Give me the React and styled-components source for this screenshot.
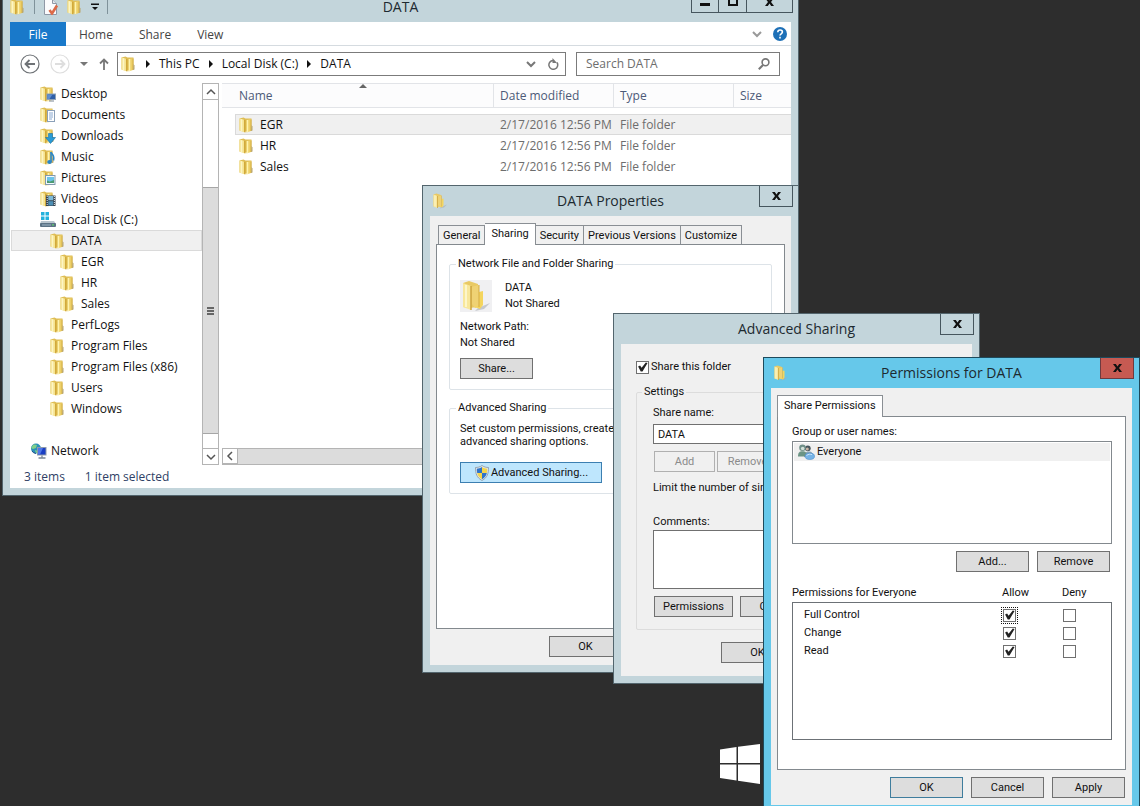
import React, { useState } from 'react';
import styled, { createGlobalStyle, css } from 'styled-components';

const ui = '"Open Sans", "Noto Sans", sans-serif';
const legacy = 'Roboto, "Liberation Sans", sans-serif';

const TREE = [
    { name: 'Desktop', level: 1, kind: 'desktop' },
    { name: 'Documents', level: 1, kind: 'documents' },
    { name: 'Downloads', level: 1, kind: 'downloads' },
    { name: 'Music', level: 1, kind: 'music' },
    { name: 'Pictures', level: 1, kind: 'pictures' },
    { name: 'Videos', level: 1, kind: 'videos' },
    { name: 'Local Disk (C:)', level: 1, kind: 'disk' },
    { name: 'DATA', level: 2, selected: true },
    { name: 'EGR', level: 3 },
    { name: 'HR', level: 3 },
    { name: 'Sales', level: 3 },
    { name: 'PerfLogs', level: 2 },
    { name: 'Program Files', level: 2 },
    { name: 'Program Files (x86)', level: 2 },
    { name: 'Users', level: 2 },
    { name: 'Windows', level: 2 },
];

const FILES = ['EGR', 'HR', 'Sales'];

/* ---------- icons ---------- */

const overlays = {
    desktop: (
        <>
            <rect x="7" y="8" width="8.500" height="5.500" fill="#2f5fa8" stroke="#8ea2b8" strokeWidth="1" />
            <path d="M7.500 8.500h5l-3 4.500h-2z" fill="#5f8fd0" />
            <path d="M9 15h5" stroke="#7a8794" />
        </>
    ),
    documents: (
        <>
            <rect x="7.500" y="3.500" width="7" height="11" fill="#fff" stroke="#8ba0b8" />
            <path d="M9 6h4M9 8h4M9 10h4M9 12h3" stroke="#6b93c4" strokeWidth=".8" />
        </>
    ),
    downloads: <path d="M8.500 5.500h4v4h3l-5 6-5-6h3z" fill="#2a9bd6" stroke="#1670a5" strokeWidth=".6" />,
    music: (
        <>
            <path d="M11 3v10" stroke="#2a86c8" strokeWidth="1.600" />
            <path d="M11 3c1 3 4 3 2.500 8.500" stroke="#2a86c8" strokeWidth="1.500" fill="none" />
            <ellipse cx="9.500" cy="13" rx="2.300" ry="1.900" fill="#2a86c8" />
        </>
    ),
    pictures: (
        <>
            <rect x="5.500" y="5.500" width="9.500" height="9" fill="#f2f9fd" stroke="#8199ad" />
            <path d="M7 7h7v4l-3 1-4-1z" fill="#6cc3e8" />
            <path d="M7 10.500l3 1 4-1.500v3H7z" fill="#4c9a72" />
        </>
    ),
    videos: (
        <>
            <rect x="6" y="4.500" width="9.500" height="10.500" fill="#35414c" />
            <rect x="8.300" y="5" width="5" height="4.300" fill="#7db9d8" />
            <rect x="8.300" y="10.200" width="5" height="4.300" fill="#4c8fb5" />
            <path d="M7.200 5v10M14.400 5v10" stroke="#dfe6ea" strokeDasharray="1 1" />
        </>
    ),
};

const FolderIcon = ({ kind, size = 16 }) => (
    <svg width={size} height={size} viewBox="0 0 16 16" aria-hidden="true">
        <path d="M.5 1.500l4-1 2 1h6v12l-6 1H4.500l-4-1z" fill="#dfbe55" />
        <path d="M.5 1.500L6 3v12.500l-5.500-2z" fill="#f5e493" />
        <path d="M2.500 2.200v12" stroke="#fdf5c4" strokeWidth="1.500" />
        <path d="M5 2.500l1.500.5v12.500L5 15z" fill="#d2a93a" />
        <path d="M7.500 3l4.500-1v12l-4.500 1.500z" fill="#edd069" />
        <path d="M8.500 3v12" stroke="#fff3ae" strokeWidth="1.500" />
        <path d="M12 2.500v11.500" stroke="#cda63b" strokeWidth=".8" />
        <path d="M12.500 8l1 1.500v4l-1.500.500z" fill="#b9a66d" />
        {overlays[kind]}
    </svg>
);

const OpenFolderIcon = ({ size = 16 }) => (
    <svg width={size} height={size} viewBox="0 0 32 32" aria-hidden="true">
        <path d="M18 28l12-5-6 6-9 2z" fill="#a9adb4" opacity=".6" />
        <path d="M3 3l6-2 9 3v23l-9 1-6-1z" fill="#e9c964" />
        <path d="M3 3l8 3v24l-8-3z" fill="#f8e79b" />
        <path d="M11 7l8-2v22l-4 1-3-4-1 5z" fill="#efd274" />
        <path d="M19 12l4-1v14l-3 4-5-2 4-2z" fill="#f4d55e" />
        <path d="M11 6v24" stroke="#c99f38" strokeWidth="1.400" />
        <path d="M19 5v22" stroke="#d5ad45" />
        <path d="M6 5v22" stroke="#fdf6c9" strokeWidth="2" />
    </svg>
);

const DiskIcon = () => (
    <svg width="16" height="16" viewBox="0 0 16 16" aria-hidden="true">
        <path d="M1 0h3.500v3.500H1zM5.500 0H9v3.500H5.500zM1 4.500h3.500V8H1zM5.500 4.500H9V8H5.500z" fill="#23b2dd" />
        <path d="M1 9h13l2 3H0z" fill="#b9c5ce" />
        <rect x="0" y="11" width="16" height="4" rx="1" fill="#5c7385" />
        <path d="M2 13h9" stroke="#9db4c4" />
        <rect x="12" y="12.300" width="2" height="1.200" fill="#5ed46b" />
    </svg>
);

const NetworkIcon = () => (
    <svg width="18" height="16" viewBox="0 0 18 16" aria-hidden="true">
        <circle cx="6" cy="5.500" r="5" fill="#2b8fb8" />
        <path d="M3 2c2-1 3 0 4 0l-1 3-3 1-2-1zM5 7l3 1-2 2.500z" fill="#7fd08a" />
        <path d="M2 8a5 5 0 0 0 4 2.500" stroke="#1f4f8b" fill="none" />
        <rect x="7.500" y="4.500" width="8.500" height="7.500" fill="#1b3fc4" stroke="#8d99ab" />
        <path d="M8 5h5l-3 6.500H8z" fill="#4f78e8" />
        <path d="M12 12.500v2M8.500 15h7" stroke="#7a8794" strokeWidth="1.300" />
    </svg>
);

const ShieldIcon = () => (
    <svg width="16" height="16" viewBox="0 0 16 16" aria-hidden="true">
        <path d="M8 .5C6 2 3.500 2.500 1.500 2.500c0 6 1 10 6.500 13 5.500-3 6.500-7 6.500-13C12.500 2.500 10 2 8 .5z" fill="#dfe6ec" stroke="#7f8a94" strokeWidth=".7" />
        <path d="M8 2C6.500 3 4.500 3.600 2.800 3.700c0 1.700.1 3 .4 4.300H8z" fill="#2f74c9" />
        <path d="M8 2c1.500 1 3.500 1.600 5.200 1.700 0 1.700-.1 3-.4 4.300H8z" fill="#f4d54b" />
        <path d="M8 8H3.200c.6 2.700 2 4.600 4.800 6.200z" fill="#f4d54b" />
        <path d="M8 8h4.800c-.6 2.700-2 4.600-4.800 6.200z" fill="#2f74c9" />
    </svg>
);

const GroupIcon = () => (
    <svg width="17" height="16" viewBox="0 0 17 16" aria-hidden="true">
        <circle cx="9.800" cy="4.300" r="2.900" fill="#46555c" />
        <circle cx="9.300" cy="4.900" r="1.500" fill="#c9b3a2" />
        <path d="M6 13c0-4 2-5.500 5-5.500s4 2 4 5z" fill="#8aa4b4" />
        <circle cx="4.500" cy="3.800" r="3.300" fill="#6f8f88" />
        <circle cx="4.700" cy="4.500" r="1.800" fill="#d2dfd8" />
        <path d="M0 12.500c0-4 1.500-5.300 4.500-5.300S9 8.500 9 12.500z" fill="#6b9485" />
        <ellipse cx="11.800" cy="12.300" rx="4.700" ry="3.200" fill="#76b3e6" stroke="#4d8cc9" strokeWidth=".6" />
        <path d="M8.500 11.500c2-1.500 4-1.500 5.500-.8" stroke="#cbe5f8" fill="none" />
    </svg>
);

const DocCheckIcon = () => (
    <svg width="16" height="16" viewBox="0 0 16 16" aria-hidden="true">
        <path d="M1.500.5h8l4 4v11h-12z" fill="#fbfbfd" stroke="#8f98a6" />
        <path d="M9.500.5v4h4" fill="#e2e6ec" stroke="#8f98a6" />
        <path d="M6.500 11l2.500 3.500L14 6.500" fill="none" stroke="#dc6a48" strokeWidth="2.600" />
    </svg>
);

const CloseGlyph = () => (
    <svg width="9" height="8" viewBox="0 0 9 8" aria-hidden="true">
        <path d="M0 0h2.800l1.700 2.500L6.200 0H9L6 4l3 4H6.200L4.500 5.500 2.800 8H0l3-4z" fill="#111" />
    </svg>
);

const Chevron = ({ dir = 'down', color = '#555', size = 10, width = 1.5 }) => {
    const d = {
        down: 'M1 3l4 4 4-4',
        up: 'M1 7l4-4 4 4',
        left: 'M7 1L3 5l4 4',
    }[dir];
    return (
        <svg width={size} height={size} viewBox="0 0 10 10" aria-hidden="true">
            <path d={d} fill="none" stroke={color} strokeWidth={width} />
        </svg>
    );
};

const Triangle = ({ dir = 'right', color = '#111' }) => {
    const d = { right: 'M2 0l4 4-4 4z', down: 'M0 2h8L4 6z', up: 'M0 6h8L4 2z' }[dir];
    return (
        <svg width="8" height="8" viewBox="0 0 8 8" aria-hidden="true">
            <path d={d} fill={color} />
        </svg>
    );
};

const RoundArrow = ({ back }) => (
    <svg width="20" height="20" viewBox="0 0 20 20" aria-hidden="true">
        <g fill="none" stroke={back ? '#6f7377' : '#dedede'}>
            <circle cx="10" cy="10" r="9" strokeWidth="1.200" />
            <path d={back ? 'M15 10H6M9.500 6L5.500 10l4 4' : 'M5 10h9M10.500 6l4 4-4 4'} strokeWidth="1.800" />
        </g>
    </svg>
);

const WindowsLogo = () => (
    <svg width="40" height="40" viewBox="0 0 40 40" aria-hidden="true">
        <path d="M0 5.500L16.500 3v16H0zM18 2.800L40 0v19H18zM0 20.500h16.500v16L0 34zM18 20.500h22V40l-22-3.200z" fill="#fff" />
    </svg>
);

/* ---------- window frame ---------- */

const WindowFrame = ({ title, icon, controls, active, closeLabel = 'Close', children, ...place }) => (
    <Frame $active={active} {...place}>
        <TitleBar>
            <TitleSide>{icon}</TitleSide>
            <Title>{title}</Title>
            <TitleButtons>
                {controls}
                <CaptionButton type="button" aria-label={closeLabel} $danger={active} $wide={!!controls}>
                    <CloseGlyph />
                </CaptionButton>
            </TitleButtons>
        </TitleBar>
        <Client>{children}</Client>
    </Frame>
);

const Explorer = () => (
    <WindowFrame
        title="DATA"
        $x={2}
        $y={-9}
        $w={797}
        $h={505}
        icon={
            <QuickAccess>
                <FolderIcon />
                <Divider />
                <DocCheckIcon />
                <FolderIcon />
                <svg width="8" height="8" viewBox="0 0 8 8" aria-hidden="true">
                    <path d="M0 .5h8v1.500H0zM1 4h6L4 7z" fill="#111" />
                </svg>
                <Divider />
            </QuickAccess>
        }
        controls={
            <>
                <CaptionButton type="button" aria-label="Minimize">
                    <svg width="10" height="8" aria-hidden="true"><path d="M0 5h10v3H0z" fill="#111" /></svg>
                </CaptionButton>
                <CaptionButton type="button" aria-label="Maximize">
                    <svg width="10" height="8" aria-hidden="true"><path d="M1 0v7h8V0" fill="none" stroke="#111" strokeWidth="2" /></svg>
                </CaptionButton>
            </>
        }
    >
        <Ribbon>
            <RibbonTab type="button" $file>File</RibbonTab>
            <RibbonTab type="button">Home</RibbonTab>
            <RibbonTab type="button">Share</RibbonTab>
            <RibbonTab type="button">View</RibbonTab>
            <RibbonEnd>
                <Chevron color="#999" width={2} />
                <svg width="14" height="14" viewBox="0 0 14 14" aria-hidden="true">
                    <circle cx="7" cy="7" r="7" fill="#1d70b7" />
                    <path d="M4.800 5.200c0-3 4.600-2.800 4.600-.2C9.400 6.800 7 6.800 7 8.600M7 9.800v1.700" fill="none" stroke="#fff" strokeWidth="1.600" />
                </svg>
            </RibbonEnd>
        </Ribbon>

        <NavBar>
            <IconButton type="button" aria-label="Back"><RoundArrow back /></IconButton>
            <IconButton type="button" aria-label="Forward"><RoundArrow /></IconButton>
            <Triangle dir="down" color="#777" />
            <IconButton type="button" aria-label="Up">
                <svg width="12" height="12" viewBox="0 0 12 12"><path d="M6 12V2M2 5.500L6 1.500l4 4" fill="none" stroke="#777" strokeWidth="1.800" /></svg>
            </IconButton>
            <Address>
                <FolderIcon />
                <Triangle />
                <span>This PC</span>
                <Triangle />
                <span>Local Disk (C:)</span>
                <Triangle />
                <span>DATA</span>
                <AddressEnd>
                    <Chevron color="#777" width={2} />
                    <svg width="12" height="12" viewBox="0 0 12 12" aria-hidden="true">
                        <path d="M10 4.500A4.400 4.400 0 1 1 6 2.500" fill="none" stroke="#777" strokeWidth="1.500" />
                        <path d="M5.500 0v5h4.500z" fill="#777" />
                    </svg>
                </AddressEnd>
            </Address>
            <Search>
                <SearchInput aria-label="Search DATA" placeholder="Search DATA" />
                <svg width="12" height="12" viewBox="0 0 12 12" aria-hidden="true">
                    <circle cx="7.500" cy="4.300" r="3.400" fill="none" stroke="#777" strokeWidth="1.600" />
                    <path d="M5 7L.8 11.200" stroke="#777" strokeWidth="2" />
                </svg>
            </Search>
        </NavBar>

        <ExplorerBody>
            <Tree>
                {TREE.map((node) => (
                    <TreeItem key={node.name} $level={node.level} $selected={node.selected}>
                        {node.kind === 'disk' ? <DiskIcon /> : <FolderIcon kind={node.kind} />}
                        {node.name}
                    </TreeItem>
                ))}
                <NetworkItem $level={0}>
                    <NetworkIcon />
                    Network
                </NetworkItem>
            </Tree>
            <VScroll>
                <ScrollButton type="button" aria-label="Scroll up"><Chevron dir="up" /></ScrollButton>
                <VThumb><i /><i /><i /></VThumb>
                <ScrollButton type="button" aria-label="Scroll down"><Chevron /></ScrollButton>
            </VScroll>
            <ListPane>
                <FileTable>
                    <colgroup>
                        <col className="lead" />
                        <col />
                        <col className="date" />
                        <col className="type" />
                        <col className="size" />
                    </colgroup>
                    <thead>
                        <tr>
                            <th aria-hidden="true" />
                            <th scope="col" className="name">
                                Name
                                <SortMark><Triangle dir="up" color="#666" /></SortMark>
                            </th>
                            <th scope="col">Date modified</th>
                            <th scope="col">Type</th>
                            <th scope="col">Size</th>
                        </tr>
                    </thead>
                    <tbody>
                        {FILES.map((name, i) => (
                            <FileRow key={name} $selected={i === 0}>
                                <td />
                                <td className="name"><FileName><FolderIcon />{name}</FileName></td>
                                <td>2/17/2016 12:56 PM</td>
                                <td>File folder</td>
                                <td />
                            </FileRow>
                        ))}
                    </tbody>
                </FileTable>
                <HScroll>
                    <ScrollButton type="button" aria-label="Scroll left"><Chevron dir="left" /></ScrollButton>
                    <HThumb />
                </HScroll>
            </ListPane>
        </ExplorerBody>

        <StatusBar>
            <span>3 items</span>
            <span>1 item selected</span>
        </StatusBar>
    </WindowFrame>
);

const Properties = () => (
    <WindowFrame title="DATA Properties" $x={422} $y={185} $w={377} $h={488} icon={<OpenFolderIcon />}>
        <TabStrip>
            <Tab type="button">General</Tab>
            <Tab type="button" $current>Sharing</Tab>
            <Tab type="button">Security</Tab>
            <Tab type="button">Previous Versions</Tab>
            <Tab type="button">Customize</Tab>
        </TabStrip>
        <SharingPage>
            <NetworkGroup>
                <legend>Network File and Folder Sharing</legend>
                <FolderSummary>
                    <Thumb><OpenFolderIcon size={32} /></Thumb>
                    <Lines>
                        <span>DATA</span>
                        <span>Not Shared</span>
                    </Lines>
                </FolderSummary>
                <Lines>
                    <span>Network Path:</span>
                    <span>Not Shared</span>
                </Lines>
                <PushButton type="button">Share...</PushButton>
            </NetworkGroup>
            <AdvancedGroup>
                <legend>Advanced Sharing</legend>
                <p>Set custom permissions, create multiple shares, and set other advanced sharing options.</p>
                <PushButton type="button" $hot $w={142}><ShieldIcon />Advanced Sharing...</PushButton>
            </AdvancedGroup>
        </SharingPage>
        <PropertiesFooter>
            <PushButton type="button">OK</PushButton>
        </PropertiesFooter>
    </WindowFrame>
);

const AdvancedSharing = () => {
    const [shared, setShared] = useState(true);
    return (
        <WindowFrame title="Advanced Sharing" $x={613} $y={313} $w={367} $h={371}>
            <AdvancedPage>
                <CheckLabel>
                    <CheckBox type="checkbox" checked={shared} onChange={(e) => setShared(e.target.checked)} />
                    Share this folder
                </CheckLabel>
                <SettingsGroup>
                    <legend>Settings</legend>
                    <label htmlFor="share-name">Share name:</label>
                    <TextBox id="share-name" defaultValue="DATA" />
                    <ButtonRow $gap={2}>
                        <PushButton type="button" disabled $w={61}>Add</PushButton>
                        <PushButton type="button" disabled $w={61}>Remove</PushButton>
                    </ButtonRow>
                    <LimitText>Limit the number of simultaneous users to:</LimitText>
                    <label htmlFor="share-comments">Comments:</label>
                    <CommentBox id="share-comments" />
                    <ButtonRow $gap={7}>
                        <PushButton type="button" $w={79}>Permissions</PushButton>
                        <PushButton type="button" $w={79}>Caching</PushButton>
                    </ButtonRow>
                </SettingsGroup>
                <AdvancedFooter>
                    <PushButton type="button">OK</PushButton>
                </AdvancedFooter>
            </AdvancedPage>
        </WindowFrame>
    );
};

const Permissions = () => {
    const [rules, setRules] = useState([
        { name: 'Full Control', allow: true, deny: false },
        { name: 'Change', allow: true, deny: false },
        { name: 'Read', allow: true, deny: false },
    ]);

    const toggle = (index, key) => {
        setRules(rules.map((r, i) => (i === index ? { ...r, [key]: !r[key] } : r)));
    };

    return (
        <WindowFrame title="Permissions for DATA" active $x={763} $y={357} $w={377} $h={456} icon={<OpenFolderIcon />}>
            <TabStrip $single>
                <Tab type="button" $current>Share Permissions</Tab>
            </TabStrip>
            <PermissionsPage>
                <span>Group or user names:</span>
                <UserList>
                    <UserItem><GroupIcon />Everyone</UserItem>
                </UserList>
                <UserButtons>
                    <PushButton type="button">Add...</PushButton>
                    <PushButton type="button">Remove</PushButton>
                </UserButtons>
                <RuleTable>
                    <thead>
                        <tr>
                            <th scope="col">Permissions for Everyone</th>
                            <th scope="col">Allow</th>
                            <th scope="col">Deny</th>
                        </tr>
                    </thead>
                    <tbody>
                        {rules.map((rule, i) => (
                            <tr key={rule.name}>
                                <th scope="row">{rule.name}</th>
                                <td>
                                    <CheckBox
                                        type="checkbox"
                                        aria-label={`Allow ${rule.name}`}
                                        checked={rule.allow}
                                        $dotted={i === 0}
                                        onChange={() => toggle(i, 'allow')}
                                    />
                                </td>
                                <td>
                                    <CheckBox
                                        type="checkbox"
                                        aria-label={`Deny ${rule.name}`}
                                        checked={rule.deny}
                                        onChange={() => toggle(i, 'deny')}
                                    />
                                </td>
                            </tr>
                        ))}
                    </tbody>
                </RuleTable>
            </PermissionsPage>
            <PermissionsFooter>
                <PushButton type="button" $default>OK</PushButton>
                <PushButton type="button">Cancel</PushButton>
                <PushButton type="button">Apply</PushButton>
            </PermissionsFooter>
        </WindowFrame>
    );
};

const App = () => (
    <>
        <GlobalStyle />
        <Desktop>
            <Wallmark><WindowsLogo /></Wallmark>
            <Explorer />
            <Properties />
            <AdvancedSharing />
            <Permissions />
        </Desktop>
    </>
);

const GlobalStyle = createGlobalStyle`
  * {
    box-sizing: border-box;
  }

  body {
    margin: 0;
    background: #2d2d2d;
    color: #111;
    font-family: ${ui};
    font-size: 12px;
  }

  button, input, textarea {
    font: inherit;
    color: inherit;
    margin: 0;
  }

  svg {
    flex: none;
    display: block;
  }
`;

const Desktop = styled.main`
  position: relative;
  min-height: 100vh;
  overflow: hidden;
`;

const Wallmark = styled.div`
  position: absolute;
  left: 720px;
  top: 744px;
`;

const Frame = styled.section`
  position: absolute;
  left: ${(p) => p.$x}px;
  top: ${(p) => p.$y}px;
  width: ${(p) => p.$w}px;
  height: ${(p) => p.$h}px;
  display: flex;
  flex-direction: column;
  padding: 0 7px 7px;
  border: 1px solid ${(p) => (p.$active ? '#1d4a5c' : '#53656d')};
  background: ${(p) => (p.$active ? '#66c8ea' : '#c3d5db')};
`;

const TitleBar = styled.header`
  height: 30px;
  flex: none;
  display: grid;
  grid-template-columns: 1fr auto 1fr;
  align-items: center;
`;

const TitleSide = styled.div`
  padding-left: 2px;
`;

const Title = styled.h1`
  margin: 0;
  font-size: 14px;
  font-weight: 400;
  line-height: 14px;
  color: #1d2a30;
`;

const TitleButtons = styled.div`
  display: flex;
  justify-content: flex-end;
  align-self: start;
  margin-right: -2px;
`;

const CaptionButton = styled.button`
  width: ${(p) => (p.$wide ? 46 : 28)}px;
  height: 21px;
  display: flex;
  align-items: center;
  justify-content: center;
  padding: 0;
  border: 1px solid #46565e;
  border-top: 0;
  background: none;

  & + & {
    border-left: 0;
  }

  &:only-child {
    width: 34px;
  }

  ${(p) => p.$danger && css`
    background: #c65a52;
    border-color: #6e3a3f;
  `}
`;

const Client = styled.div`
  flex: 1;
  min-height: 0;
  display: flex;
  flex-direction: column;
  background: #f0f0f0;
`;

/* explorer */

const QuickAccess = styled.div`
  display: flex;
  align-items: center;
  gap: 8px;
  margin-left: -2px;
`;

const Divider = styled.span`
  width: 1px;
  height: 14px;
  background: #7f929a;
`;

const Ribbon = styled.nav`
  height: 24px;
  flex: none;
  display: flex;
  background: #fff;
  border-bottom: 1px solid #d5dbe0;
`;

const RibbonTab = styled.button`
  height: 24px;
  padding: 0 13px;
  border: 0;
  background: none;
  color: #444;

  ${(p) => p.$file && css`
    width: 56px;
    background: #1979ca;
    color: #fff;
  `}
`;

const RibbonEnd = styled.div`
  display: flex;
  align-items: center;
  gap: 11px;
  margin-left: auto;
  padding-right: 4px;
`;

const NavBar = styled.div`
  height: 37px;
  flex: none;
  display: flex;
  align-items: center;
  gap: 10px;
  padding: 0 11px 2px 10px;
  background: #fff;
`;

const IconButton = styled.button`
  display: flex;
  padding: 0;
  border: 0;
  background: none;
`;

const Address = styled.div`
  flex: 1;
  height: 24px;
  display: flex;
  align-items: center;
  gap: 7px;
  margin-left: -3px;
  padding: 0 6px 0 3px;
  border: 1px solid #7b7b7b;
`;

const AddressEnd = styled.span`
  display: flex;
  align-items: center;
  gap: 11px;
  margin-left: auto;
`;

const Search = styled.div`
  width: 204px;
  height: 24px;
  display: flex;
  align-items: center;
  padding: 0 9px;
  border: 1px solid #7b7b7b;
`;

const SearchInput = styled.input`
  flex: 1;
  min-width: 0;
  padding: 0;
  border: 0;
  outline: 0;
  background: none;

  &::placeholder {
    color: #6d6d6d;
    opacity: 1;
  }
`;

const ExplorerBody = styled.div`
  flex: 1;
  min-height: 0;
  display: flex;
  background: #fff;
`;

const Tree = styled.ul`
  width: 192px;
  margin: 0;
  padding: 0;
  list-style: none;
`;

const TreeItem = styled.li`
  height: 21px;
  display: flex;
  align-items: center;
  gap: 5px;
  margin-left: 1px;
  padding-left: ${(p) => 18 + p.$level * 10}px;
  border: 1px solid ${(p) => (p.$selected ? '#dadada' : 'transparent')};
  background: ${(p) => (p.$selected ? '#f0f0f0' : 'none')};
`;

const NetworkItem = styled(TreeItem)`
  margin-top: 21px;
  gap: 3px;
`;

const VScroll = styled.div`
  width: 17px;
  display: flex;
  flex-direction: column;
  justify-content: space-between;
  border: 1px solid #b4b4b4;
`;

const ScrollButton = styled.button`
  width: 15px;
  height: 16px;
  flex: none;
  display: flex;
  align-items: center;
  justify-content: center;
  padding: 0;
  border: 0 solid #b4b4b4;
  background: #fff;

  &:first-child {
    border-bottom-width: 1px;
  }

  &:last-child {
    border-top-width: 1px;
  }
`;

const VThumb = styled.div`
  height: 247px;
  margin-top: 73px;
  display: flex;
  flex-direction: column;
  align-items: center;
  justify-content: center;
  gap: 1px;
  border: 1px solid #a6a6a6;
  border-width: 1px 0;
  background: #dcdcdc;

  i {
    width: 7px;
    height: 2px;
    background: #666;
  }
`;

const ListPane = styled.div`
  flex: 1;
  min-width: 0;
  margin-left: 3px;
  display: flex;
  flex-direction: column;
  justify-content: space-between;
`;

const FileTable = styled.table`
  width: 100%;
  table-layout: fixed;
  border-collapse: separate;
  border-spacing: 0;
  color: #6d6d6d;

  .lead { width: 13px; }
  .date, .type { width: 120px; }
  .size { width: 57px; }

  th {
    position: relative;
    height: 25px;
    padding: 0 0 0 6px;
    border: 1px solid #e2e4e8;
    border-left: 0;
    background: #fcfcfd;
    color: #4c5a78;
    font-weight: 400;
    text-align: left;
  }

  th:first-child, th:last-child {
    border-right: 0;
  }

  tbody::before {
    content: '';
    display: block;
    height: 6px;
  }

  td {
    height: 21px;
    padding: 0 0 0 6px;
    border: 1px solid transparent;
    border-width: 1px 0;
  }

  .name { padding-left: 4px; }
`;

const SortMark = styled.span`
  position: absolute;
  top: -2px;
  left: 48%;
`;

const FileRow = styled.tr`
  ${(p) => p.$selected && css`
    td:not(:first-child) {
      background: #f0f0f0;
      border-color: #dadada;
    }

    td.name {
      padding-left: 3px;
      border-left-width: 1px;
    }
  `}
`;

const FileName = styled.span`
  display: flex;
  align-items: center;
  gap: 5px;
  color: #111;
`;

const HScroll = styled.div`
  height: 17px;
  display: flex;
  border: 1px solid #b4b4b4;

  button {
    height: 15px;
    border-width: 0 1px 0 0;
  }
`;

const HThumb = styled.div`
  flex: 1;
  background: #dcdcdc;
`;

const StatusBar = styled.footer`
  height: 23px;
  flex: none;
  display: flex;
  align-items: center;
  gap: 20px;
  padding-left: 14px;
  background: #fff;
  color: #2f3f66;
`;

/* dialogs */

const TabStrip = styled.div`
  display: flex;
  align-items: flex-end;
  padding: ${(p) => (p.$single ? '7px 6px 0' : '7px 8px 0')};
  font-family: ${legacy};
  font-size: 11px;
`;

const Tab = styled.button`
  height: 19px;
  padding: 0 4px;
  border: 1px solid #8a8f94;
  border-bottom: 0;
  background: #f0f0f0;
  white-space: nowrap;

  & + & {
    border-left: 0;
  }

  ${(p) => p.$current && css`
    position: relative;
    height: 22px;
    margin-bottom: -1px;
    padding: 0 6px 2px;
    background: #fff;
  `}
`;

const Page = styled.div`
  display: flex;
  flex-direction: column;
  margin: 0 6px;
  border: 1px solid #83898e;
  background: #fff;
  font-family: ${legacy};
  font-size: 11px;
  line-height: 16px;
`;

const SharingPage = styled(Page)`
  height: 385px;
  padding: 11px 12px 10px;
  gap: 10px;
`;

const Group = styled.fieldset`
  display: flex;
  flex-direction: column;
  align-items: flex-start;
  min-width: 0;
  margin: 0;
  padding: 8px 10px;
  border: 1px solid #dde3e8;
  border-radius: 2px;

  legend {
    padding: 0 2px;
    margin-left: -4px;
  }

  p {
    margin: 0;
    line-height: 13px;
  }
`;

const NetworkGroup = styled(Group)`
  height: 134px;
  gap: 7px;
`;

const AdvancedGroup = styled(Group)`
  height: 94px;
  gap: 14px;
  padding-top: 6px;
`;

const FolderSummary = styled.div`
  display: flex;
  align-items: center;
  gap: 13px;
`;

const Thumb = styled.span`
  background: #f0f0f2;
`;

const Lines = styled.div`
  display: flex;
  flex-direction: column;
`;

const PushButton = styled.button`
  width: ${(p) => p.$w || 73}px;
  height: 21px;
  flex: none;
  display: flex;
  align-items: center;
  justify-content: center;
  gap: 1px;
  padding: 0;
  border: 1px solid #707070;
  background: #dddddd;
  line-height: 16px;

  ${(p) => p.$hot && css`
    border-color: #3c7fb1;
    background: #bee6fd;
  `}

  ${(p) => p.$default && css`
    border-color: #3f7d9d;
  `}

  &:disabled {
    border-color: #b0b0b0;
    background: #f0f0f0;
    color: #8b8b8b;
  }
`;

const Footer = styled.div`
  display: flex;
  gap: 8px;
  font-family: ${legacy};
  font-size: 11px;
`;

const PropertiesFooter = styled(Footer)`
  padding: 7px 0 0 119px;
`;

const AdvancedPage = styled.div`
  display: flex;
  flex-direction: column;
  padding: 15px;
  font-family: ${legacy};
  font-size: 11px;
  line-height: 16px;
`;

const CheckLabel = styled.label`
  display: flex;
  align-items: center;
  gap: 2px;
`;

const CheckBox = styled.input`
  appearance: none;
  width: 13px;
  height: 13px;
  flex: none;
  display: block;
  border: 1px solid #707070;
  background: #fff;

  &:checked::before {
    content: '';
    display: block;
    height: 11px;
    background: #222;
    clip-path: polygon(10% 45%, 28% 36%, 42% 56%, 80% 8%, 96% 14%, 50% 92%, 34% 92%);
  }

  ${(p) => p.$dotted && css`
    outline: 1px dotted #111;
    outline-offset: 1px;
  `}
`;

const SettingsGroup = styled(Group)`
  margin-top: 9px;
  height: 246px;
  padding: 5px 16px;
  border-color: #dcdcdc;

  legend {
    margin-left: -11px;
  }
`;

const TextBox = styled.input`
  width: 100%;
  height: 20px;
  margin-top: 3px;
  padding: 0 4px;
  border: 1px solid #707070;
  background: #fff;
`;

const ButtonRow = styled.div`
  display: flex;
  gap: ${(p) => p.$gap}px;
  padding: 7px 0 8px 1px;
`;

const LimitText = styled.span`
  margin-bottom: 18px;
`;

const CommentBox = styled.textarea`
  width: 100%;
  height: 59px;
  border: 1px solid #707070;
  background: #fff;
  resize: none;
`;

const AdvancedFooter = styled(Footer)`
  padding: 12px 0 0 85px;
`;

const PermissionsPage = styled(Page)`
  height: 355px;
  padding: 7px 13px 0 14px;
`;

const UserList = styled.ul`
  height: 103px;
  margin: 1px 0 7px;
  padding: 1px;
  border: 1px solid #83898e;
  list-style: none;
`;

const UserItem = styled.li`
  height: 18px;
  display: flex;
  align-items: center;
  gap: 2px;
  padding-left: 4px;
  background: #f0f0f0;
`;

const UserButtons = styled.div`
  display: flex;
  justify-content: flex-end;
  gap: 8px;
  padding: 0 2px 13px;
`;

const RuleTable = styled.table`
  display: block;

  thead, tbody {
    display: block;
  }

  tr {
    display: grid;
    grid-template-columns: 1fr 60px 50px;
  }

  th {
    padding: 0;
    font-weight: 400;
    text-align: left;
  }

  td {
    padding: 0;
  }

  thead tr {
    height: 17px;
  }

  tbody {
    height: 138px;
    padding-top: 3px;
    border: 1px solid #6c7176;
  }

  tbody tr {
    height: 18px;
    align-items: center;
  }

  tbody th {
    padding-left: 11px;
  }

  tbody td {
    padding-left: 2px;
  }
`;

const PermissionsFooter = styled(Footer)`
  justify-content: flex-end;
  padding: 7px 7px;
`;

export default App;
